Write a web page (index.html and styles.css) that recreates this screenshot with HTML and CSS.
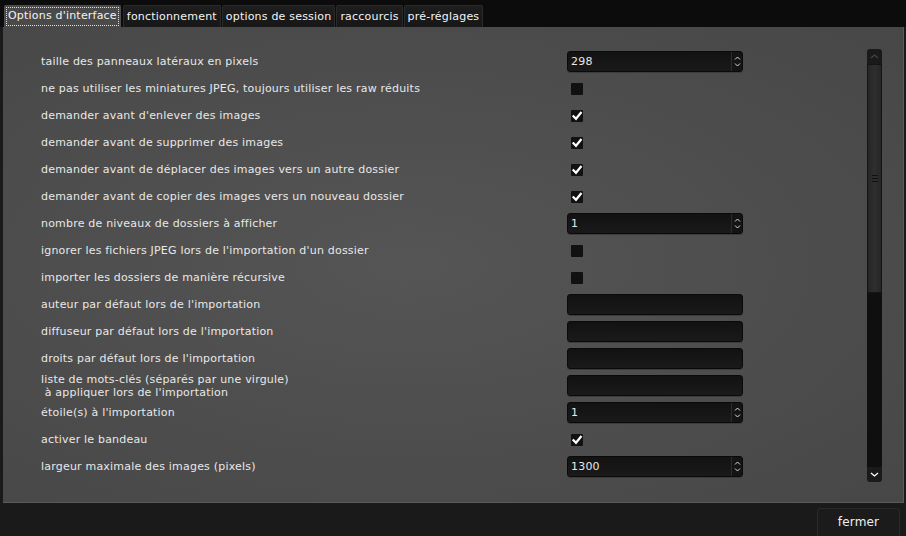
FILE: index.html
```html
<!DOCTYPE html>
<html lang="fr">
<head>
<meta charset="utf-8">
<title>préférences</title>
<link rel="stylesheet" href="styles.css">
</head>
<body>
<div class="window">
  <div class="tabbar">
    <div class="tab active"><span class="focus">Options d'interface</span></div>
    <div class="tab">fonctionnement</div>
    <div class="tab">options de session</div>
    <div class="tab">raccourcis</div>
    <div class="tab">pré-réglages</div>
  </div>
  <div class="panel">
    <div class="rows">
      <div class="row"><span class="label">taille des panneaux latéraux en pixels</span><div class="spin"><span class="val">298</span><span class="arrows"><svg viewBox="0 0 7 4" class="ar"><path d="M1 3.5 L3.5 1 L6 3.5"/></svg><svg viewBox="0 0 7 4" class="ar"><path d="M1 0.5 L3.5 3 L6 0.5"/></svg></span></div></div>
      <div class="row"><span class="label">ne pas utiliser les miniatures JPEG, toujours utiliser les raw réduits</span><span class="check"></span></div>
      <div class="row"><span class="label">demander avant d'enlever des images</span><span class="check"><svg viewBox="0 0 12 12" class="tick"><path d="M2.5 6.2 L5 8.8 L9.8 2.8"/></svg></span></div>
      <div class="row"><span class="label">demander avant de supprimer des images</span><span class="check"><svg viewBox="0 0 12 12" class="tick"><path d="M2.5 6.2 L5 8.8 L9.8 2.8"/></svg></span></div>
      <div class="row"><span class="label">demander avant de déplacer des images vers un autre dossier</span><span class="check"><svg viewBox="0 0 12 12" class="tick"><path d="M2.5 6.2 L5 8.8 L9.8 2.8"/></svg></span></div>
      <div class="row"><span class="label">demander avant de copier des images vers un nouveau dossier</span><span class="check"><svg viewBox="0 0 12 12" class="tick"><path d="M2.5 6.2 L5 8.8 L9.8 2.8"/></svg></span></div>
      <div class="row"><span class="label">nombre de niveaux de dossiers à afficher</span><div class="spin"><span class="val">1</span><span class="arrows"><svg viewBox="0 0 7 4" class="ar"><path d="M1 3.5 L3.5 1 L6 3.5"/></svg><svg viewBox="0 0 7 4" class="ar"><path d="M1 0.5 L3.5 3 L6 0.5"/></svg></span></div></div>
      <div class="row"><span class="label">ignorer les fichiers JPEG lors de l'importation d'un dossier</span><span class="check"></span></div>
      <div class="row"><span class="label">importer les dossiers de manière récursive</span><span class="check"></span></div>
      <div class="row"><span class="label">auteur par défaut lors de l'importation</span><div class="entry"></div></div>
      <div class="row"><span class="label">diffuseur par défaut lors de l'importation</span><div class="entry"></div></div>
      <div class="row"><span class="label">droits par défaut lors de l'importation</span><div class="entry"></div></div>
      <div class="row"><span class="label">liste de mots-clés (séparés par une virgule)<br>&nbsp;à appliquer lors de l'importation</span><div class="entry"></div></div>
      <div class="row"><span class="label">étoile(s) à l'importation</span><div class="spin"><span class="val">1</span><span class="arrows"><svg viewBox="0 0 7 4" class="ar"><path d="M1 3.5 L3.5 1 L6 3.5"/></svg><svg viewBox="0 0 7 4" class="ar"><path d="M1 0.5 L3.5 3 L6 0.5"/></svg></span></div></div>
      <div class="row"><span class="label">activer le bandeau</span><span class="check"><svg viewBox="0 0 12 12" class="tick"><path d="M2.5 6.2 L5 8.8 L9.8 2.8"/></svg></span></div>
      <div class="row"><span class="label">largeur maximale des images (pixels)</span><div class="spin"><span class="val">1300</span><span class="arrows"><svg viewBox="0 0 7 4" class="ar"><path d="M1 3.5 L3.5 1 L6 3.5"/></svg><svg viewBox="0 0 7 4" class="ar"><path d="M1 0.5 L3.5 3 L6 0.5"/></svg></span></div></div>
    </div>
    <div class="scrollbar">
      <div class="sbtn up"><svg viewBox="0 0 9 5" class="sar"><path d="M1 4 L4.5 1 L8 4"/></svg></div>
      <div class="trough">
        <div class="slider"><span class="grip"></span></div>
      </div>
      <div class="sbtn down"><svg viewBox="0 0 9 5" class="sar"><path d="M1 1 L4.5 4 L8 1"/></svg></div>
    </div>
  </div>
  <div class="footer">
    <div class="button">fermer</div>
  </div>
</div>
</body>
</html>
```
FILE: styles.css
```css
html, body {
  margin: 0;
  padding: 0;
}
body {
  background: #1a1a1a;
  font-family: "DejaVu Sans", "Noto Sans", sans-serif;
  font-size: 11px;
  letter-spacing: 0.2px;
  color: #e8e8e8;
}
.window {
  width: 906px;
  height: 536px;
  display: flex;
  flex-direction: column;
  overflow: hidden;
}
.tabbar {
  height: 27px;
  box-sizing: border-box;
  padding: 5px 0 0 4px;
  background: #0c0c0c;
  display: flex;
  align-items: stretch;
}
.tab {
  box-sizing: border-box;
  height: 22px;
  padding: 0 3px;
  margin-right: 1px;
  display: flex;
  align-items: center;
  background: linear-gradient(#1e1e1e, #171717);
  border: 1px solid #2a2a2a;
  border-bottom: none;
  border-radius: 2px 2px 0 0;
  color: #f4f4f4;
  font-size: 11px;
}
.tab.active {
  background: #4a4a4a;
  border-color: #4e4e4e;
  padding: 0 1px;
  margin-right: 2px;
}
.focus {
  border: 1px dotted #e0e0e0;
  padding: 1px 1px 2px;
  line-height: 14px;
}
.panel {
  height: 476px;
  margin: 0 2px 0 3px;
  background: radial-gradient(ellipse at 45% 50%, #555555 0%, #4d4d4d 55%, #474747 100%);
  border-right: 1px solid #5a5a5a;
  border-bottom: 1px solid #5a5a5a;
  box-sizing: border-box;
  display: flex;
}
.rows {
  flex: 1;
  padding: 21px 0 0 38px;
  display: flex;
  flex-direction: column;
}
.row {
  height: 27px;
  display: grid;
  grid-template-columns: 526px 176px;
  align-items: center;
}
.label {
  white-space: nowrap;
  line-height: 13px;
}
.spin {
  height: 21px;
  box-sizing: border-box;
  background: linear-gradient(#121212, #1a1a1a);
  border: 1px solid #0a0a0a;
  border-radius: 3px;
  display: flex;
  align-items: center;
  box-shadow: 0 1px 0 #3c3c3c;
}
.val {
  flex: 1;
  padding-left: 3px;
  color: #e8e8e8;
}
.arrows {
  width: 10px;
  height: 19px;
  border-left: 1px solid #2c2c2c;
  display: flex;
  flex-direction: column;
  align-items: center;
  justify-content: center;
  gap: 3px;
  background: #141414;
  border-radius: 0 2px 2px 0;
}
.ar {
  width: 7px;
  height: 4px;
  display: block;
}
.ar path {
  fill: none;
  stroke: #d8d8d8;
  stroke-width: 1;
}
.check {
  width: 12px;
  height: 12px;
  margin-left: 4px;
  background: #111111;
  border-radius: 1px;
  display: flex;
}
.tick {
  width: 12px;
  height: 12px;
}
.tick path {
  fill: none;
  stroke: #ffffff;
  stroke-width: 2.2;
  stroke-linecap: square;
}
.entry {
  height: 21px;
  box-sizing: border-box;
  background: linear-gradient(#121212, #1a1a1a);
  border: 1px solid #0a0a0a;
  border-radius: 3px;
  box-shadow: 0 1px 0 #3c3c3c;
}
.scrollbar {
  width: 15px;
  margin: 22px 21px 0 0;
  height: 433px;
  display: flex;
  flex-direction: column;
}
.sbtn {
  height: 15px;
  background: #1a1a1a;
  display: flex;
  align-items: center;
  justify-content: center;
}
.sar {
  width: 9px;
  height: 5px;
}
.sar path {
  fill: none;
  stroke: #444;
  stroke-width: 1.3;
}
.sbtn.up {
  border-radius: 3px 3px 0 0;
}
.sbtn.down {
  border-radius: 0 0 3px 3px;
}
.sbtn.down .sar path {
  stroke: #ffffff;
}
.trough {
  flex: 1;
  background: #0f0f0f;
  display: flex;
  flex-direction: column;
}
.slider {
  height: 229px;
  box-sizing: border-box;
  background: linear-gradient(90deg, #262626, #2e2e2e 50%, #262626);
  border: 1px solid #141414;
  display: flex;
  justify-content: center;
  align-items: center;
}
.grip {
  width: 6px;
  height: 5px;
  border-top: 1px solid #111;
  border-bottom: 1px solid #111;
  position: relative;
}
.grip::after {
  content: "";
  position: absolute;
  left: 0;
  right: 0;
  top: 2px;
  border-top: 1px solid #111;
}
.footer {
  flex: 1;
  display: flex;
  justify-content: flex-end;
  align-items: flex-end;
  padding-right: 6px;
}
.button {
  width: 83px;
  height: 28px;
  box-sizing: border-box;
  background: #1b1b1b;
  border: 1px solid #2a2a2a;
  border-bottom: none;
  border-radius: 4px 4px 0 0;
  color: #f0f0f0;
  font-size: 12px;
  display: flex;
  align-items: center;
  justify-content: center;
  padding-bottom: 1px;
}
```
